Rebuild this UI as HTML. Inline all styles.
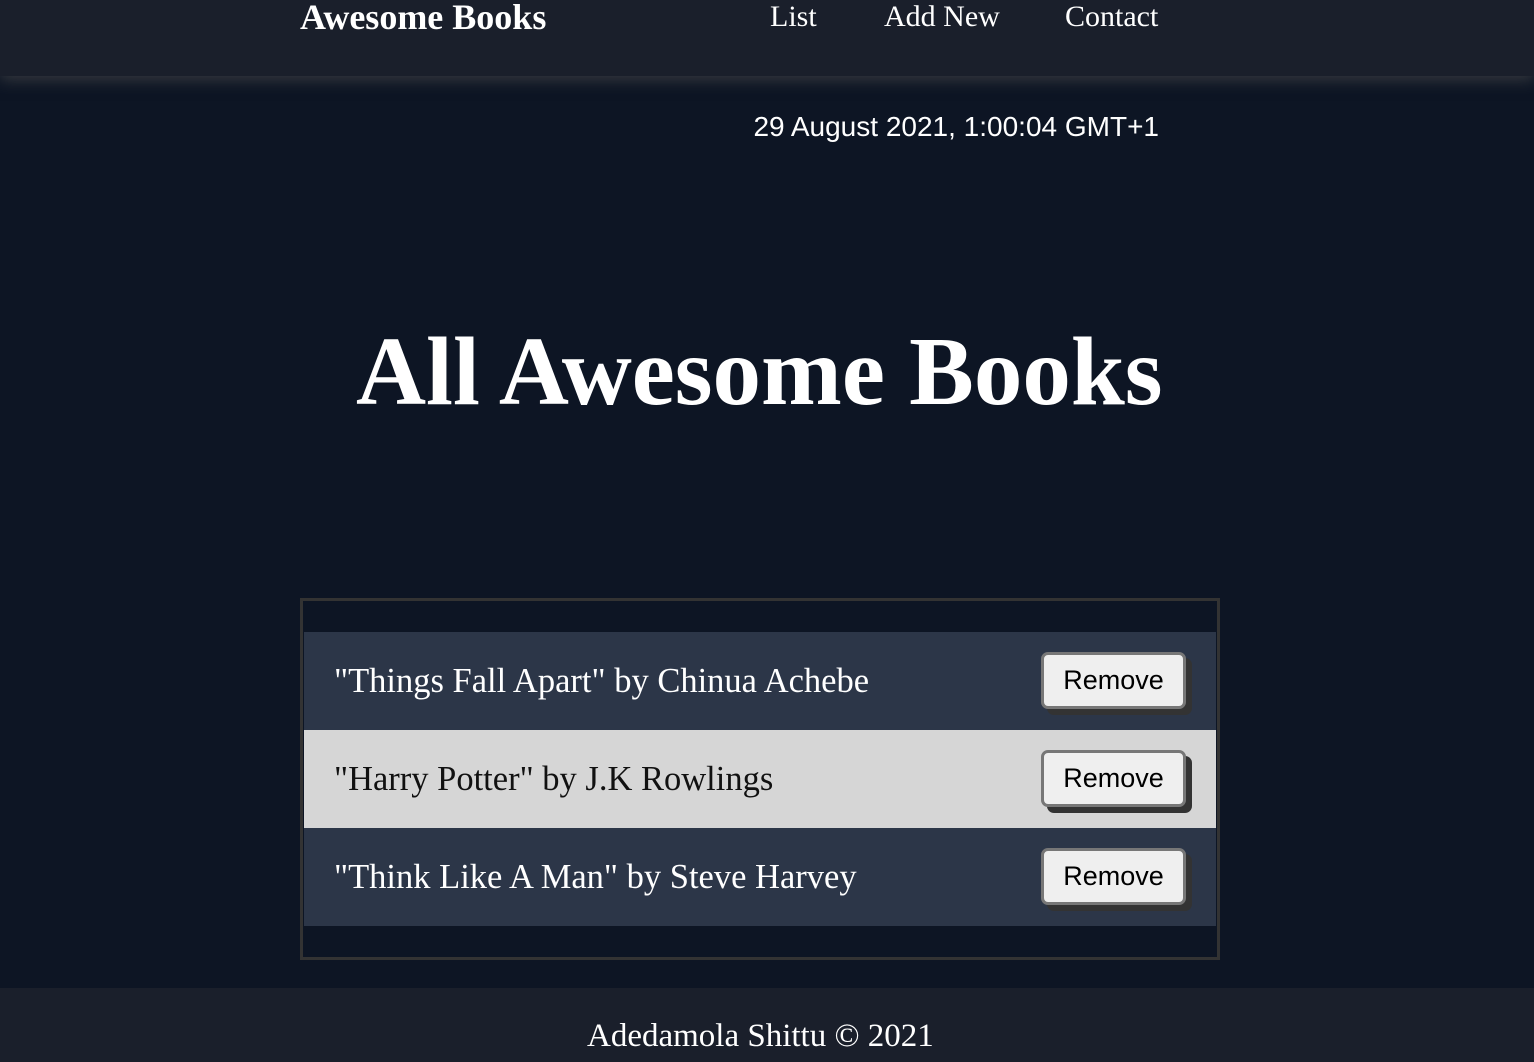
<!DOCTYPE html>
<html><head><meta charset="utf-8"><style>
*{margin:0;padding:0;box-sizing:border-box}
body{width:1534px;height:1062px;background:#0d1524;font-family:"Liberation Serif",serif;color:#fff;position:relative;overflow:hidden}
header{position:absolute;left:0;top:0;width:1534px;height:76px;background:#1a1f2b;box-shadow:0 4px 14px rgba(80,80,80,.6)}
.logo{position:absolute;left:300px;top:-4px;font-size:36px;font-weight:bold;white-space:nowrap}
.nav{position:absolute;top:0;font-size:30px;white-space:nowrap}
.date{position:absolute;right:375px;top:111px;font-family:"Liberation Sans",sans-serif;font-size:28px}
h1{position:absolute;left:356px;top:322px;font-size:97px;font-weight:bold;line-height:100px;white-space:nowrap}
.box{position:absolute;left:300px;top:598px;width:920px;height:362px;border:3px solid #333;background:#0d1524}
.row{position:absolute;left:1px;width:912px;height:98px;font-size:34.5px;padding-left:30px;line-height:98px;white-space:nowrap}
.d{background:#2c3648;color:#fff}.l{background:#d6d6d6;color:#111}
.btn{position:absolute;left:737px;top:20px;width:145px;height:57px;background:#efefef;border:3px solid #777;border-radius:7px;box-shadow:6px 6px 0 #333;font-family:"Liberation Sans",sans-serif;font-size:27px;color:#000;line-height:51px;text-align:center}
footer{position:absolute;left:0;top:988px;width:1534px;height:74px;background:#1a1f2b;font-size:33px}
footer span{position:absolute;left:587px;top:30px;white-space:nowrap}
</style></head><body>
<header>
<div class="logo">Awesome Books</div>
<div class="nav" style="left:770px">List</div>
<div class="nav" style="left:884px">Add New</div>
<div class="nav" style="left:1065px">Contact</div>
</header>
<div class="date">29 August 2021, 1:00:04 GMT+1</div>
<h1>All Awesome Books</h1>
<div class="box">
<div class="row d" style="top:31px">"Things Fall Apart" by Chinua Achebe<div class="btn">Remove</div></div>
<div class="row l" style="top:129px">"Harry Potter" by J.K Rowlings<div class="btn">Remove</div></div>
<div class="row d" style="top:227px">"Think Like A Man" by Steve Harvey<div class="btn">Remove</div></div>
</div>
<footer><span>Adedamola Shittu © 2021</span></footer>
</body></html>
